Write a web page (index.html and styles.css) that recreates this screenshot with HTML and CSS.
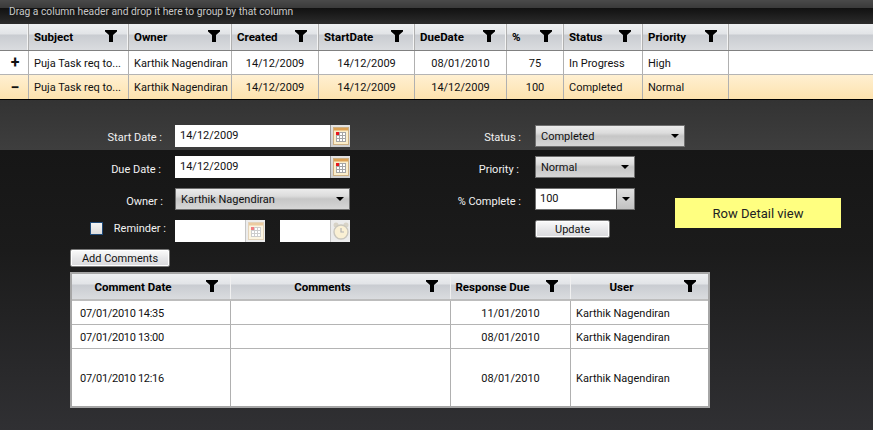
FILE: index.html
```html
<!DOCTYPE html>
<html lang="en">
<head>
<meta charset="utf-8">
<title>Task grid</title>
<link rel="stylesheet" href="styles.css">
</head>
<body>
<svg class="defs" width="0" height="0" aria-hidden="true">
  <symbol id="funnel" viewBox="0 0 12 12"><path d="M0 0H12V1.5L8 5V12H4V5L0 1.5Z"/></symbol>
  <symbol id="cal" viewBox="0 0 16 18">
    <rect x="0.5" y="0.5" width="15" height="17" fill="#fbeecb" stroke="#cdb083"/>
    <rect x="1" y="1" width="14" height="2.5" fill="#dca154"/>
    <rect x="3" y="5" width="10" height="10" fill="#a5a5a5"/>
    <path d="M4 6h2v2H4zM7 6h2v2H7zM10 6h2v2h-2zM4 9h2v2H4zM7 9h2v2H7zM10 9h2v2h-2zM4 12h2v2H4zM7 12h2v2H7zM10 12h2v2h-2z" fill="#fff"/>
    <rect x="3" y="5" width="3" height="3" fill="#e8141c"/>
  </symbol>
  <symbol id="clock" viewBox="0 0 16 18">
    <circle cx="3" cy="3" r="2.5" fill="#b9b09a"/><circle cx="13" cy="3" r="2.5" fill="#b9b09a"/>
    <circle cx="8" cy="10" r="7" fill="#f6e4b2" stroke="#a09a88" stroke-width="1.4"/>
    <path d="M8 6V10H11" fill="none" stroke="#777" stroke-width="1.2"/>
  </symbol>
</svg>
<div class="page">
  <div class="topstrip"></div>
  <div class="grouppanel">Drag a column header and drop it here to group by that column</div>

  <div class="grid main-grid">
    <div class="head">
      <div class="hc"></div>
      <div class="hc"><span>Subject</span><svg class="fn"><use href="#funnel"/></svg></div>
      <div class="hc"><span>Owner</span><svg class="fn"><use href="#funnel"/></svg></div>
      <div class="hc"><span>Created</span><svg class="fn"><use href="#funnel"/></svg></div>
      <div class="hc"><span>StartDate</span><svg class="fn"><use href="#funnel"/></svg></div>
      <div class="hc"><span>DueDate</span><svg class="fn"><use href="#funnel"/></svg></div>
      <div class="hc"><span>%</span><svg class="fn"><use href="#funnel"/></svg></div>
      <div class="hc"><span>Status</span><svg class="fn"><use href="#funnel"/></svg></div>
      <div class="hc"><span>Priority</span><svg class="fn"><use href="#funnel"/></svg></div>
      <div class="hc hc-fill"></div>
    </div>
    <div class="row">
      <div class="c toggle">+</div><div class="c">Puja Task req to...</div><div class="c">Karthik Nagendiran</div>
      <div class="c mid">14/12/2009</div><div class="c mid">14/12/2009</div><div class="c mid">08/01/2010</div>
      <div class="c mid">75</div><div class="c">In Progress</div><div class="c">High</div><div class="c last"></div>
    </div>
    <div class="row selected">
      <div class="c toggle">&minus;</div><div class="c">Puja Task req to...</div><div class="c">Karthik Nagendiran</div>
      <div class="c mid">14/12/2009</div><div class="c mid">14/12/2009</div><div class="c mid">14/12/2009</div>
      <div class="c mid">100</div><div class="c">Completed</div><div class="c">Normal</div><div class="c last"></div>
    </div>
  </div>

  <div class="detail">
    <div class="form">
      <div class="lbl lbl-start">Start Date :</div>
      <div class="field"><span class="val">14/12/2009</span><span class="pick"><svg class="ico"><use href="#cal"/></svg></span></div>
      <div class="lbl lbl-r lbl-first">Status :</div>
      <div class="combo w150"><span>Completed</span><i class="arrow"></i></div>
      <div></div>

      <div class="lbl lbl-due">Due Date :</div>
      <div class="field"><span class="val">14/12/2009</span><span class="pick"><svg class="ico"><use href="#cal"/></svg></span></div>
      <div class="lbl lbl-r2">Priority :</div>
      <div class="combo w100"><span>Normal</span><i class="arrow"></i></div>
      <div></div>

      <div class="lbl lbl-owner">Owner :</div>
      <div class="combo"><span>Karthik Nagendiran</span><i class="arrow"></i></div>
      <div class="lbl lbl-r lbl-low">% Complete :</div>
      <div class="spin w100"><span class="val">100</span><span class="spinbtn"><i class="arrow"></i></span></div>
      <div class="note">Row Detail view</div>

      <div class="lbl lbl-rem"><i class="check"></i><span>Reminder :</span></div>
      <div class="reminder">
        <div class="field w90"><span class="pick off"><svg class="ico"><use href="#cal"/></svg></span></div>
        <div class="field w70"><span class="pick off"><svg class="ico"><use href="#clock"/></svg></span></div>
      </div>
      <div class="lbl"></div>
      <div><button class="btn btn-update" type="button">Update</button></div>
    </div>

    <button class="btn btn-add" type="button">Add Comments</button>

    <div class="grid comments">
      <div class="chead">
        <div class="chc"><span>Comment Date</span><svg class="fn"><use href="#funnel"/></svg></div>
        <div class="chc"><span>Comments</span><svg class="fn"><use href="#funnel"/></svg></div>
        <div class="chc"><span>Response Due</span><svg class="fn"><use href="#funnel"/></svg></div>
        <div class="chc"><span>User</span><svg class="fn"><use href="#funnel"/></svg></div>
      </div>
      <div class="crow"><div class="cc ts">07/01/2010 14:35</div><div class="cc"></div><div class="cc mid">11/01/2010</div><div class="cc">Karthik Nagendiran</div></div>
      <div class="crow"><div class="cc ts">07/01/2010 13:00</div><div class="cc"></div><div class="cc mid">08/01/2010</div><div class="cc">Karthik Nagendiran</div></div>
      <div class="crow tall"><div class="cc ts">07/01/2010 12:16</div><div class="cc"></div><div class="cc mid">08/01/2010</div><div class="cc">Karthik Nagendiran</div></div>
    </div>
  </div>
</div>
</body>
</html>
```
FILE: styles.css
```css
* { box-sizing: border-box; }
html, body { margin: 0; height: 100%; }
body { overflow: hidden; background: #1a1a1a; font: 11px Roboto, "Noto Sans", sans-serif; color: #111; }
.defs { position: absolute; }
.page { width: 873px; height: 430px; display: flex; flex-direction: column; }

.topstrip { height: 8px; background: linear-gradient(#4a4a4a, #3a3a3a); }
.grouppanel { height: 16px; padding-left: 9px; line-height: 8px; background: linear-gradient(#111, #2c2c2c); color: #c8c8c8; font-size: 10.25px; }

.main-grid { background: #fff; }
.head, .row { display: grid; grid-template-columns: 29px 100px 103px 87px 96px 92px 57px 79px 86px 1fr; }
.head { height: 27px; border-bottom: 1px solid #808080; background: linear-gradient(#eef0f2 0, #e2e4e7 10px, #c9ccd1 11px, #dadcdf 100%); }
.hc { display: flex; align-items: center; justify-content: space-between; padding: 0 11px 0 5px; border-right: 1px solid #b0b0b0; box-shadow: inset -1px 0 0 #f4f4f4; font-size: 11.5px; font-weight: 700; color: #000; }
.hc-fill { border-right: 0; box-shadow: none; }
.fn { width: 12px; height: 12px; flex: none; margin-top: -2px; }

.row { height: 24px; border-bottom: 1px solid #b4b4b4; }
.row.selected { height: 25px; border-bottom: 1px solid #000; background: linear-gradient(#fff0d2, #fde2ae); }
.c { display: flex; align-items: center; padding: 1px 5px 0; border-right: 1px solid #b0b0b0; white-space: nowrap; overflow: hidden; }
.row.selected .c { padding-top: 0; }
.c.last { border-right: 0; }
.mid { justify-content: center; }
.row .toggle { justify-content: center; font-size: 16px; font-weight: 700; padding: 0 0 0 2px; }

.detail { flex: 1; padding: 25px 0 0 70px; background: linear-gradient(#333 0, #3e3e3e 50px, #161616 50px, #1b1b1b 150px, #303033 100%); }
.form { display: grid; grid-template-columns: 105px 175px 185px 150px 166px; grid-template-rows: 31px 32px 32px 29px; align-items: start; }
.lbl { height: 22px; display: flex; align-items: center; justify-content: flex-end; color: #f2f2f2; padding-top: 4px; }
.lbl-start { padding-right: 13px; padding-top: 2px; }
.lbl-first { padding-top: 2px; }
.lbl-due { padding-right: 14px; }
.lbl-owner { padding-right: 12px; }
.lbl-r { padding-right: 14px; }
.lbl-r2 { padding-right: 16px; }
.lbl-rem { padding: 0 9px 0 20px; height: 16px; justify-content: space-between; }
.check { width: 13px; height: 13px; background: linear-gradient(#f4f4f4, #ddd); border: 1px solid #1f4a78; }

.field { height: 22px; display: flex; justify-content: flex-end; align-items: stretch; background: #fff; }
.val { flex: 1; padding-left: 5px; line-height: 22px; color: #111; }
.pick { width: 20px; display: flex; align-items: center; justify-content: center; background: linear-gradient(#e4e4e4, #cfcfcf); border-left: 1px solid #999; }
.pick.off { opacity: .55; background: #ddd; }
.ico { width: 16px; height: 18px; }

.combo { height: 22px; display: flex; align-items: center; justify-content: space-between; padding: 0 5px; border: 1px solid #6f6f6f; background: linear-gradient(#ececec 0, #dcdcdc 35%, #c6c6c6 50%, #d6d6d6 100%); color: #111; }
.arrow { width: 0; height: 0; border: 4px solid transparent; border-top: 4px solid #000; border-bottom: 0; border-left-width: 4.5px; border-right-width: 4.5px; }
.w150 { width: 150px; }
.w100 { width: 100px; }
.spin { height: 22px; display: flex; background: #fff; border: 1px solid #6f6f6f; }
.spin .val { padding-left: 4px; line-height: 20px; }
.spinbtn { width: 18px; display: flex; align-items: center; justify-content: center; background: linear-gradient(#e0e0e0, #c2c2c2); border-left: 1px solid #6f6f6f; }

.note { grid-row: span 2; width: 166px; height: 30px; margin: 10px 0 0 -10px; display: flex; align-items: center; justify-content: center; background: #ffff80; color: #222; font-size: 13px; }
.reminder { display: flex; justify-content: space-between; width: 175px; }
.w90 { width: 90px; }
.w70 { width: 70px; }

.btn { display: block; padding: 0; height: 18px; border: 1px solid #777; border-radius: 2px; background: linear-gradient(#fbfbfb, #e6e6e8 55%, #d9d9dc); font: 11px Roboto, "Noto Sans", sans-serif; color: #111; line-height: 15px; box-shadow: inset 0 0 0 1px #fff; }
.btn-update { width: 75px; }
.btn-add { width: 100px; }

.comments { width: 640px; height: 136px; margin-top: 5px; border: 2px solid #a6a6a6; background: #fff; }
.chead, .crow { display: grid; grid-template-columns: 159px 220px 120px 1fr; }
.chead { height: 27px; border-bottom: 2px solid #bdbdbd; background: linear-gradient(#eef0f2 0, #e2e4e7 10px, #c9ccd1 11px, #dadcdf 100%); }
.chc { display: flex; align-items: center; padding-right: 12px; border-right: 1px solid #f0f0f0; font-size: 11.5px; font-weight: 700; color: #000; }
.chc:last-child { border-right: 0; }
.chc span { flex: 1; text-align: center; padding-right: 12px; }
.crow { height: 24px; border-bottom: 1px solid #b4b4b4; }
.crow.tall { height: 57px; border-bottom: 0; }
.cc { display: flex; align-items: center; padding: 1px 0 0 8px; border-right: 1px solid #b0b0b0; color: #111; }
.cc:last-child { border-right: 0; padding-left: 5px; }
.cc.mid { padding-left: 0; }
.ts { letter-spacing: -.3px; }
```
